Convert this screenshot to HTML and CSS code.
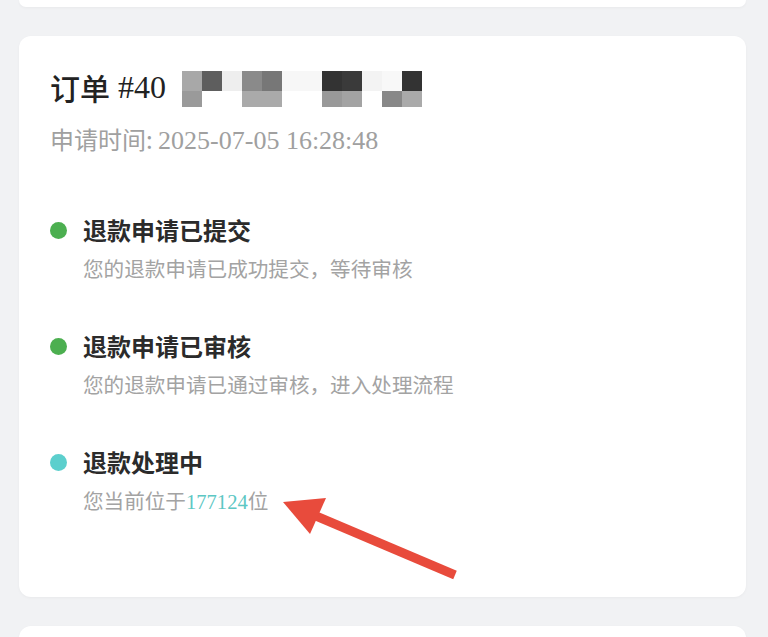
FILE: index.html
```html
<!DOCTYPE html>
<html lang="zh-CN">
<head>
    <meta charset="UTF-8">
    <meta name="viewport" content="width=device-width, initial-scale=1.0">
    <title>退款进度</title>
    <link rel="stylesheet" href="styles.css">
</head>
<body>
    <div class="card card-prev"></div>

    <div class="card order-card">
        <div class="order-title">
            <span class="cjk">订单</span><span class="num order-no">#40</span>
            <div class="mosaic">
                <i class="c1"></i><i class="c2"></i><i class="c3"></i><i class="c4"></i><i class="c5"></i><i class="c6"></i><i class="c6"></i><i class="c7"></i><i class="c8"></i><i class="c9"></i><i class="c10"></i><i class="c7"></i>
                <i class="d1"></i><i></i><i></i><i class="d2"></i><i class="d2"></i><i></i><i></i><i class="d3"></i><i class="d4"></i><i></i><i class="d5"></i><i class="d2"></i>
            </div>
        </div>
        <div class="order-time">申请时间: <span class="num">2025-07-05 16:28:48</span></div>

        <ul class="steps">
            <li class="step">
                <span class="dot done"></span>
                <div class="step-body">
                    <div class="step-title">退款申请已提交</div>
                    <div class="step-desc">您的退款申请已成功提交，等待审核</div>
                </div>
            </li>
            <li class="step">
                <span class="dot done"></span>
                <div class="step-body">
                    <div class="step-title">退款申请已审核</div>
                    <div class="step-desc">您的退款申请已通过审核，进入处理流程</div>
                </div>
            </li>
            <li class="step">
                <span class="dot active"></span>
                <div class="step-body">
                    <div class="step-title">退款处理中</div>
                    <div class="step-desc">您当前位于<span class="rank">177124</span>位</div>
                </div>
            </li>
        </ul>

        <!-- annotation arrow -->
        <svg class="arrow" width="727" height="561" viewBox="0 0 727 561">
            <line x1="297" y1="480" x2="436" y2="539" stroke="#e84b3c" stroke-width="9"/>
            <polygon points="264,466 307,462 291,498" fill="#e84b3c"/>
        </svg>
    </div>

    <div class="card card-next"></div>
</body>
</html>
```

FILE: styles.css
```css
body {
    margin: 0;
    padding: 0;
    background: #f1f2f4;
    font-family: "Noto Sans CJK SC", "Noto Sans", sans-serif;
    overflow: hidden;
}
.card {
    background: #ffffff;
    margin: 0 22px 0 19px;
    border-radius: 12px;
    box-shadow: 0 1px 3px rgba(0, 0, 0, 0.04);
}
.card-prev {
    height: 7px;
    border-radius: 0 0 12px 12px;
}
.card-next {
    height: 40px;
    margin-top: 29px;
    border-radius: 12px 12px 0 0;
}
.order-card {
    position: relative;
    margin-top: 29px;
    height: 561px;
    box-sizing: border-box;
    padding: 31px 31px 0 31px;
}
.num {
    font-family: "Liberation Serif", serif;
}
.order-title {
    display: flex;
    align-items: center;
    height: 40px;
    font-size: 30px;
    color: #222;
}
.order-title .cjk {
    font-weight: 500;
}
.order-no {
    font-size: 32px;
    margin-left: 8px;
}
.mosaic {
    display: grid;
    grid-template-columns: repeat(12, 20px);
    grid-template-rows: 20px 16px;
    margin-left: 16px;
    margin-top: 4px;
}
.mosaic i { display: block; }
.c1 { background: #a8a8a8; }
.c2 { background: #5e5e5e; }
.c3 { background: #eeeeee; }
.c4 { background: #8a8a8a; }
.c5 { background: #777777; }
.c6 { background: #f7f7f7; }
.c7 { background: #333333; }
.c8 { background: #3a3a3a; }
.c9 { background: #f3f3f3; }
.c10 { background: #f8f8f8; }
.d1 { background: #9a9a9a; }
.d2 { background: #aaaaaa; }
.d3 { background: #999999; }
.d4 { background: #a3a3a3; }
.d5 { background: #888888; }

.order-time {
    margin-top: 17px;
    height: 30px;
    line-height: 30px;
    font-size: 24px;
    color: #a0a0a0;
}
.order-time .num {
    font-size: 26px;
}

.steps {
    list-style: none;
    margin: 60px 0 0 0;
    padding: 0;
}
.step {
    display: flex;
    align-items: flex-start;
    margin-bottom: 48px;
}
.dot {
    width: 17px;
    height: 17px;
    border-radius: 50%;
    margin: 8px 16px 0 0;
    flex-shrink: 0;
}
.dot.done { background: #4caf50; }
.dot.active { background: #5ccfcd; }
.step-title {
    height: 32px;
    line-height: 32px;
    font-size: 24px;
    font-weight: 700;
    color: #2b2b2b;
}
.step-desc {
    margin-top: 8px;
    height: 28px;
    line-height: 28px;
    font-size: 20.6px;
    color: #a3a3a3;
}
.rank {
    font-family: "Liberation Serif", serif;
    color: #5cc7c4;
}
.arrow {
    position: absolute;
    left: 0;
    top: 0;
    pointer-events: none;
}
```
